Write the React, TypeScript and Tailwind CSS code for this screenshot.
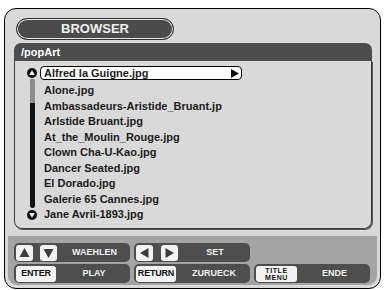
const files = [
  "Alone.jpg",
  "Ambassadeurs-Aristide_Bruant.jp",
  "Arlstide Bruant.jpg",
  "At_the_Moulin_Rouge.jpg",
  "Clown Cha-U-Kao.jpg",
  "Dancer Seated.jpg",
  "El Dorado.jpg",
  "Galerie 65 Cannes.jpg",
  "Jane Avril-1893.jpg",
];

function Circle({ up }: { up: boolean }) {
  return (
    <svg width="10" height="10" viewBox="0 0 10 10">
      <circle cx="5" cy="5" r="5" fill="#111" />
      <polygon points={up ? "5,2.2 7.8,6.9 2.2,6.9" : "5,7.8 7.8,3.1 2.2,3.1"} fill="#fff" />
    </svg>
  );
}

function Arrow({ dir }: { dir: "up" | "down" | "left" | "right" }) {
  const pts = {
    up: "8.5,3 13.5,12 3.5,12",
    down: "8.5,13 13.5,4 3.5,4",
    left: "4,8 12.5,3 12.5,13",
    right: "13,8 4.5,3 4.5,13",
  }[dir];
  return (
    <div className="w-[17px] h-[16px] rounded-[3px] bg-[#f2f2f2] shrink-0">
      <svg width="17" height="16" viewBox="0 0 17 16">
        <polygon points={pts} fill="#3c3c3c" />
      </svg>
    </div>
  );
}

function Group({ children }: { children: React.ReactNode }) {
  return <div className="h-[19px] rounded-[5px] bg-[#4e4e4e] flex items-center px-[2px]">{children}</div>;
}

function Label({ text }: { text: string }) {
  return <div className="flex-1 pl-[4px] text-center text-[9px] font-bold text-[#f0f0f0] leading-none">{text}</div>;
}

function KeyBox({ text }: { text: string }) {
  return (
    <div className="w-[40px] h-[16px] rounded-[3px] bg-[#f2f2f2] shrink-0 flex items-center justify-center text-[9px] font-bold text-[#111] tracking-[-0.2px] leading-none">
      {text}
    </div>
  );
}

export default function App() {
  return (
    <div className="w-[384px] h-[290px] bg-white pt-[8px] pl-[4px] font-['Liberation_Sans',Arial,sans-serif]">
      <div className="w-[377px] h-[281px] rounded-[12px] border border-black bg-[#d9d9d9] flex flex-col">
        <div className="ml-[11px] mt-[9px] w-[158px] h-[22px] rounded-full border border-[#333] bg-[#4b4b4b] shadow-[inset_0_0_0_1px_#e6e6e6] flex items-center justify-center text-[13px] font-bold text-[#f0f0f0]">
          BROWSER
        </div>

        <div className="ml-[9px] mt-[3px] w-[358px] h-[186px] flex flex-col">
          <div className="h-[18px] rounded-t-[7px] bg-[#4c4c4c] pl-[7px] flex items-center text-[11px] font-bold text-white">
            /popArt
          </div>
          <div className="flex-1 border-x border-b border-[#3a3a3a] rounded-b-[8px] shadow-[1px_1px_0_#555] pl-[12px] pt-[5px] flex">
            <div className="w-[10px] flex flex-col items-center">
              <div className="mt-[2px] h-[10px]">
                <Circle up />
              </div>
              <div className="mt-[1px] w-[5px] h-[129px] rounded-full overflow-hidden bg-[#111] flex flex-col">
                <div className="h-[24px] bg-[#8c8c8c]" />
              </div>
              <div className="mt-[2px] h-[10px]">
                <Circle up={false} />
              </div>
            </div>
            <div className="ml-[3px] flex flex-col text-[11px] font-bold text-[#1c1c1c] leading-none">
              <div className="w-[202px] h-[14px] border border-black rounded-[4px] bg-white flex items-center justify-between pl-[3px] pr-[2px]">
                <span>Alfred la Guigne.jpg</span>
                <svg width="8" height="9" viewBox="0 0 8 9">
                  <polygon points="0,0 8,4.5 0,9" fill="#111" />
                </svg>
              </div>
              <div className="mt-[3px]">
                {files.map((f) => (
                  <div key={f} className="h-[15.5px] flex items-center pl-[4px] whitespace-nowrap">
                    {f}
                  </div>
                ))}
              </div>
            </div>
          </div>
        </div>

        <div className="mx-[3px] mt-[7px] mb-[3px] flex-1 rounded-b-[9px] bg-[#a4a4a4] pt-[7px] pl-[6px]">
          <div className="grid grid-cols-[116px_116px_116px] gap-x-[4px] gap-y-[2px]">
            <Group>
              <Arrow dir="up" />
              <div className="ml-[7px]">
                <Arrow dir="down" />
              </div>
              <Label text="WAEHLEN" />
            </Group>
            <Group>
              <Arrow dir="left" />
              <div className="ml-[8px]">
                <Arrow dir="right" />
              </div>
              <Label text="SET" />
            </Group>
            <div />
            <Group>
              <KeyBox text="ENTER" />
              <Label text="PLAY" />
            </Group>
            <Group>
              <KeyBox text="RETURN" />
              <Label text="ZURUECK" />
            </Group>
            <Group>
              <div className="w-[41px] h-[16px] rounded-[3px] bg-[#f2f2f2] shrink-0 flex flex-col items-center justify-center text-[7px] font-bold text-[#111] leading-[7px] tracking-[0.6px]">
                <span>TITLE</span>
                <span>MENU</span>
              </div>
              <Label text="ENDE" />
            </Group>
          </div>
        </div>
      </div>
    </div>
  );
}
